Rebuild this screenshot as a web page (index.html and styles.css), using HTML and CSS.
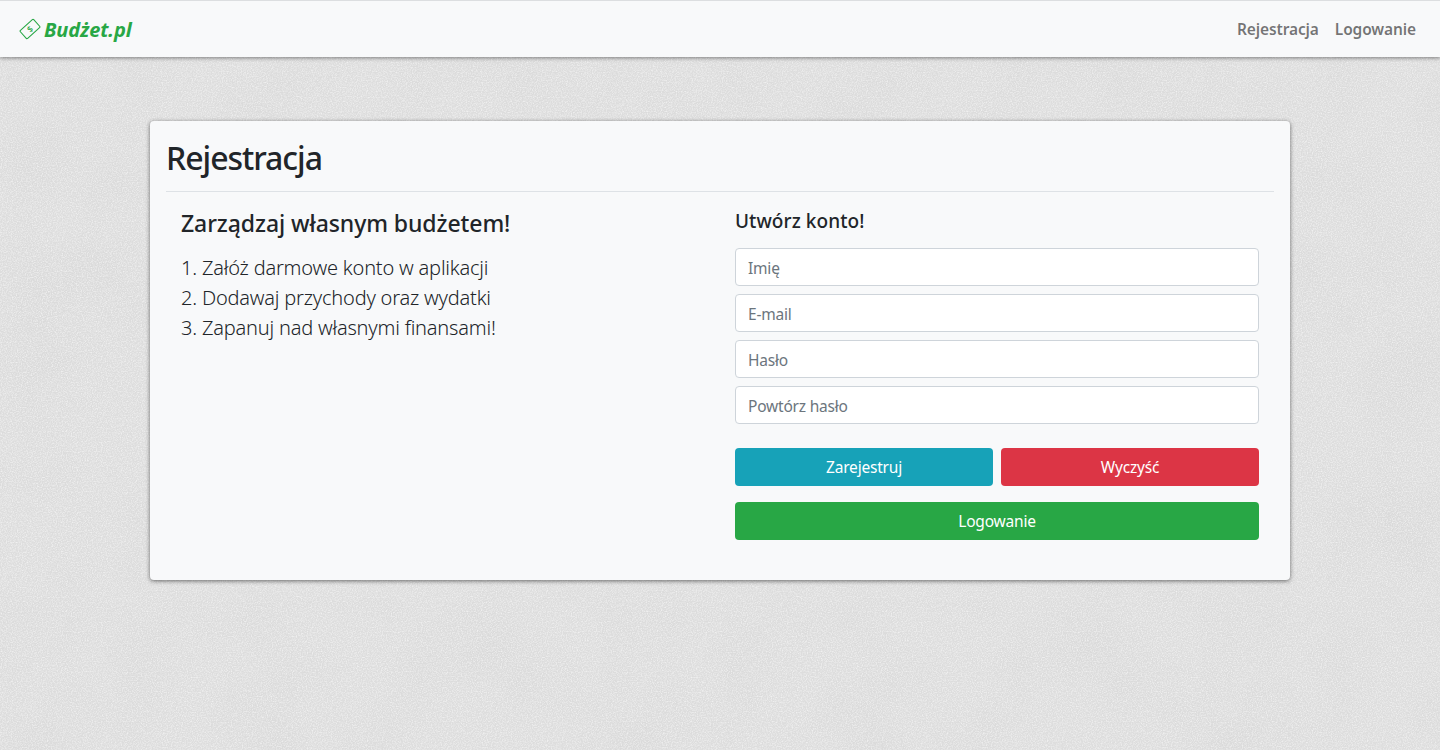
FILE: index.html
```html
<!DOCTYPE html>
<html lang="pl">
<head>
<meta charset="utf-8">
<title>Budżet.pl – Rejestracja</title>
<link rel="stylesheet" href="styles.css">
</head>
<body>
<nav class="navbar">
  <a class="brand" href="#">
    <svg class="brand-icon" width="22" height="22" viewBox="0 0 22 22" aria-hidden="true">
      <g transform="rotate(-42 11 11)">
        <rect x="2" y="5.6" width="18" height="10.8" rx="1" fill="none" stroke="#28a745" stroke-width="1.1"/>
        <text x="11" y="14.2" text-anchor="middle" class="brand-dollar">$</text>
      </g>
    </svg>
    <span>Budżet.pl</span>
  </a>
  <div class="nav-links">
    <a href="#">Rejestracja</a>
    <a href="#">Logowanie</a>
  </div>
</nav>
<main class="card">
  <h1 class="card-title">Rejestracja</h1>
  <div class="columns">
    <section class="col">
      <h2 class="promo-title">Zarządzaj własnym budżetem!</h2>
      <ol class="steps">
        <li>1. Załóż darmowe konto w aplikacji</li>
        <li>2. Dodawaj przychody oraz wydatki</li>
        <li>3. Zapanuj nad własnymi finansami!</li>
      </ol>
    </section>
    <section class="col">
      <h2 class="form-title">Utwórz konto!</h2>
      <form class="form">
        <input class="field" type="text" placeholder="Imię">
        <input class="field" type="email" placeholder="E-mail">
        <input class="field" type="password" placeholder="Hasło">
        <input class="field" type="password" placeholder="Powtórz hasło">
        <div class="btn-row">
          <button class="btn btn-info" type="button">Zarejestruj</button>
          <button class="btn btn-danger" type="reset">Wyczyść</button>
        </div>
        <button class="btn btn-success" type="button">Logowanie</button>
      </form>
    </section>
  </div>
</main>
</body>
</html>
```
FILE: styles.css
```css
* { box-sizing: border-box; }
html, body { height: 100%; }
body {
  margin: 0;
  overflow: hidden;
  font-family: "Noto Sans", "Open Sans", sans-serif;
  color: #212529;
  background-color: #dddddd;
  background-image:
    url("data:image/svg+xml,%3Csvg xmlns='http://www.w3.org/2000/svg' width='500' height='500'%3E%3Cfilter id='n'%3E%3CfeTurbulence type='fractalNoise' baseFrequency='.8' numOctaves='2' stitchTiles='stitch'/%3E%3CfeColorMatrix values='0 0 0 0 1 0 0 0 0 1 0 0 0 0 1 1.2 0 0 0 -.46'/%3E%3C/filter%3E%3Crect width='500' height='500' filter='url(%23n)'/%3E%3C/svg%3E"),
    url("data:image/svg+xml,%3Csvg xmlns='http://www.w3.org/2000/svg' width='600' height='600'%3E%3Cfilter id='m'%3E%3CfeTurbulence type='fractalNoise' baseFrequency='.012' numOctaves='3' stitchTiles='stitch'/%3E%3CfeColorMatrix values='0 0 0 0 .6 0 0 0 0 .6 0 0 0 0 .6 .4 0 0 0 -.16'/%3E%3C/filter%3E%3Crect width='600' height='600' filter='url(%23m)'/%3E%3C/svg%3E");
}
a { text-decoration: none; }
.navbar {
  height: 57px;
  border-top: 1px solid #dcdee0;
  background: #f8f9fa;
  box-shadow: 0 1px 4px rgba(0, 0, 0, .45);
  display: flex;
  align-items: center;
  justify-content: space-between;
  padding: 0 24px 0 19px;
}
.brand {
  display: flex;
  align-items: center;
  gap: 3px;
  color: #28a745;
  font-size: 20px;
  font-weight: 700;
  font-style: italic;
  letter-spacing: -.12px;
}
.brand-dollar { font-size: 8.5px; font-weight: 500; font-style: normal; fill: #28a745; letter-spacing: 0; }
.nav-links { display: flex; gap: 16px; }
.nav-links a {
  color: rgba(0, 0, 0, .55);
  font-size: 15.5px;
  font-weight: 600;
  letter-spacing: -.12px;
}
.card {
  width: 1140px;
  height: 459px;
  margin: 64px auto 0;
  padding: 16px;
  background: #f8f9fa;
  border-radius: 4px;
  box-shadow: 0 1px 4px rgba(0, 0, 0, .55);
}
.card-title {
  margin: 0;
  height: 55px;
  font-size: 32px;
  line-height: 42px;
  font-weight: 500;
  letter-spacing: -1.03px;
  border-bottom: 1px solid #dee2e6;
}
.columns { display: grid; grid-template-columns: 1fr 1fr; }
.col { padding: 0 15px; }
.promo-title {
  margin: 15px 0 0;
  font-size: 23px;
  line-height: 33px;
  font-weight: 500;
  letter-spacing: -.08px;
}
.steps {
  list-style: none;
  margin: 13px 0 0;
  padding: 0;
  font-size: 20px;
  line-height: 30px;
  font-weight: 300;
  letter-spacing: -.2px;
}
.form-title {
  margin: 15px 0 13px;
  font-size: 19px;
  line-height: 28px;
  font-weight: 500;
  letter-spacing: .08px;
}
.form { display: flex; flex-direction: column; gap: 8px; }
.field {
  height: 38px;
  padding: 2px 12px 0;
  border: 1px solid #ced4da;
  border-radius: 4px;
  background: #fff;
  font: inherit;
  font-size: 15.5px;
  letter-spacing: -.2px;
  color: #495057;
}
.field::placeholder { color: #6c757d; opacity: 1; }
.btn-row { display: grid; grid-template-columns: 1fr 1fr; gap: 8px; margin-top: 16px; margin-bottom: 8px; }
.btn {
  height: 38px;
  border: 0;
  border-radius: 4px;
  color: #fff;
  font: inherit;
  font-size: 15.5px;
  letter-spacing: -.2px;
}
.btn-info { background: #17a2b8; }
.btn-danger { background: #dc3545; }
.btn-success { background: #28a745; }
```
